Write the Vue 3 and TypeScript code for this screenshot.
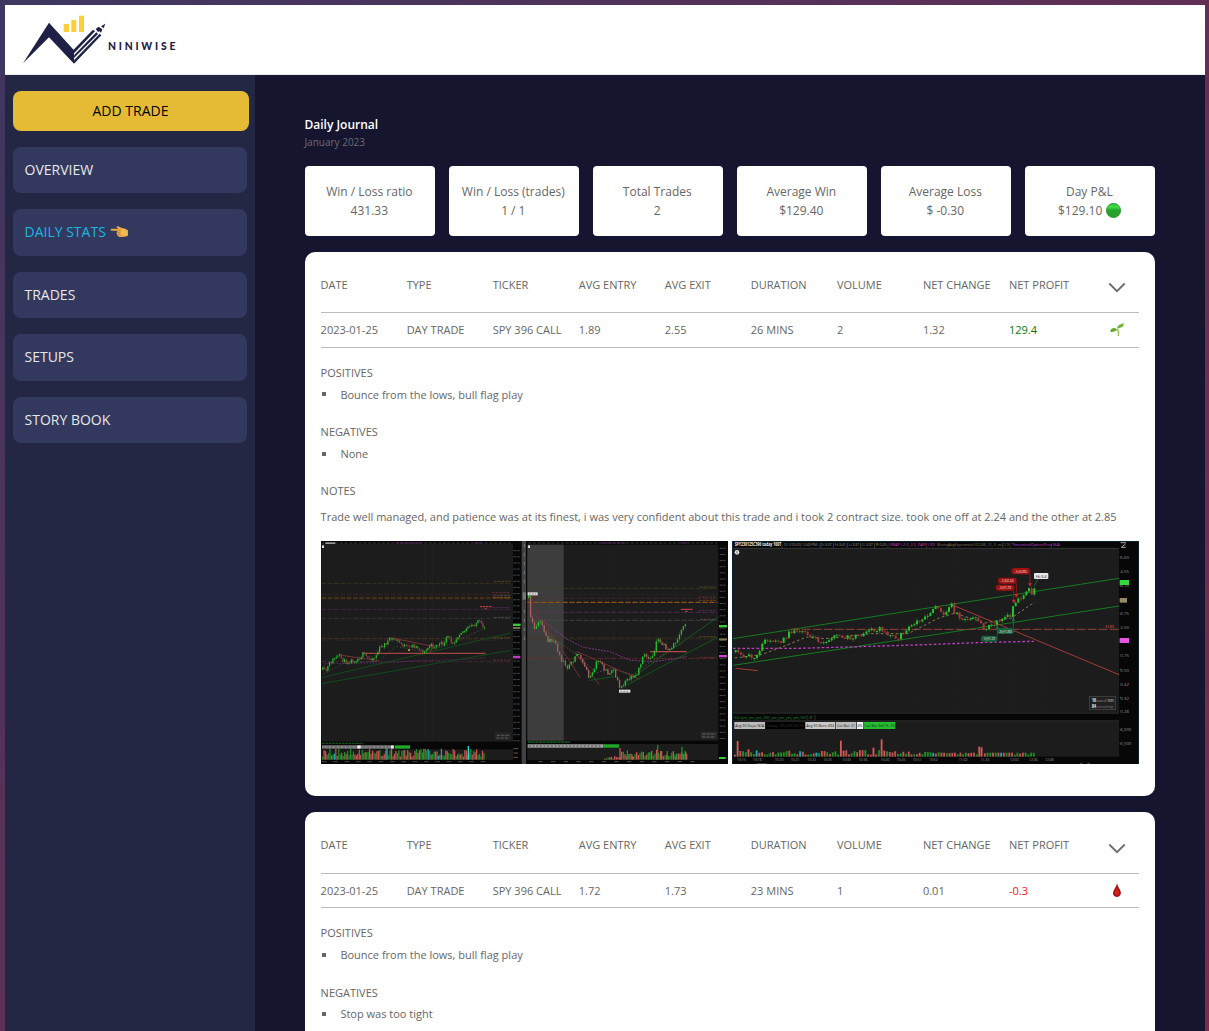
<script setup lang="ts">
type Point = [number, number]

interface Candle {
  x: number
  top: number
  height: number
  high: number
  low: number
  color: string
}

interface Trade {
  date: string
  type: string
  ticker: string
  entry: string
  exit: string
  duration: string
  volume: string
  change: string
  profit: string
  win: boolean
  positives: string[]
  negatives: string[]
  notes: string
}

const navItems = ['OVERVIEW', 'DAILY STATS', 'TRADES', 'SETUPS', 'STORY BOOK']
const activeItem = 'DAILY STATS'

const stats = [
  { label: 'Win / Loss ratio', value: '431.33' },
  { label: 'Win / Loss (trades)', value: '1 / 1' },
  { label: 'Total Trades', value: '2' },
  { label: 'Average Win', value: '$129.40' },
  { label: 'Average Loss', value: '$ -0.30' },
  { label: 'Day P&L', value: '$129.10', dot: true },
]

const columns = ['DATE', 'TYPE', 'TICKER', 'AVG ENTRY', 'AVG EXIT', 'DURATION', 'VOLUME', 'NET CHANGE', 'NET PROFIT']

const trades: Trade[] = [
  {
    date: '2023-01-25', type: 'DAY TRADE', ticker: 'SPY 396 CALL', entry: '1.89', exit: '2.55',
    duration: '26 MINS', volume: '2', change: '1.32', profit: '129.4', win: true,
    positives: ['Bounce from the lows, bull flag play'],
    negatives: ['None'],
    notes: 'Trade well managed, and patience was at its finest, i was very confident about this trade and i took 2 contract size. took one off at 2.24 and the other at 2.85',
  },
  {
    date: '2023-01-25', type: 'DAY TRADE', ticker: 'SPY 396 CALL', entry: '1.72', exit: '1.73',
    duration: '23 MINS', volume: '1', change: '0.01', profit: '-0.3', win: false,
    positives: ['Bounce from the lows, bull flag play'],
    negatives: ['Stop was too tight'],
    notes: '',
  },
]

// Repeatable pseudo random series, so the charts look the same on every load
function series(seed: number) {
  let s = seed
  return () => {
    s = (s * 16807) % 2147483647
    return s / 2147483647
  }
}

function priceAt(points: Point[], x: number): number {
  for (let i = 1; i < points.length; i++) {
    const a = points[i - 1]
    const b = points[i]
    if (x <= b[0]) return a[1] + ((b[1] - a[1]) * (x - a[0])) / (b[0] - a[0])
  }
  return points[points.length - 1][1]
}

function candles(points: Point[], step: number, noise: number, seed: number, down: string): Candle[] {
  const rnd = series(seed)
  const out: Candle[] = []
  const end = points[points.length - 1][0]
  let prev = points[0][1]
  for (let x = points[0][0]; x <= end; x += step) {
    const next = priceAt(points, x) + (rnd() - 0.5) * noise
    const top = Math.min(prev, next)
    const height = Math.max(3, Math.abs(prev - next))
    out.push({
      x, top, height,
      high: top - rnd() * noise * 0.5,
      low: top + height + rnd() * noise * 0.5,
      color: next <= prev ? '#22c32b' : down,
    })
    prev = next
  }
  return out
}

const priceLeft = candles([[14, 395], [22, 402], [35, 375], [50, 360], [65, 355], [80, 372], [100, 368], [120, 362], [135, 348], [150, 362], [170, 358], [185, 330], [200, 318], [215, 305], [230, 303], [245, 315], [265, 328], [285, 322], [300, 328], [318, 345], [335, 322], [350, 325], [365, 318], [380, 318], [387, 293], [400, 312], [410, 308], [425, 282], [440, 278], [455, 266], [470, 258], [482, 250], [492, 268], [502, 264]], 5, 14, 11, '#8d4a48')
const priceRight = candles([[25, 180], [32, 250], [45, 278], [62, 240], [75, 300], [90, 310], [105, 310], [115, 350], [140, 388], [155, 375], [170, 345], [185, 360], [207, 420], [225, 385], [230, 370], [245, 380], [262, 410], [280, 395], [300, 448], [315, 425], [330, 415], [350, 405], [370, 355], [385, 360], [400, 345], [410, 308], [425, 315], [445, 338], [470, 308], [485, 275], [495, 258], [500, 268]], 5.8, 16, 23, '#a8615f')
const priceOption = candles([[22, 343], [40, 352], [65, 350], [80, 365], [95, 340], [108, 305], [130, 312], [160, 310], [175, 295], [188, 280], [210, 282], [230, 280], [245, 290], [275, 310], [300, 305], [330, 290], [350, 298], [370, 300], [395, 295], [415, 280], [435, 275], [460, 272], [480, 295], [510, 298], [530, 280], [550, 260], [580, 240], [605, 225], [620, 208], [626, 212], [645, 225], [670, 203], [680, 225], [710, 245], [740, 235], [765, 272], [790, 258], [810, 250], [830, 235], [845, 238], [860, 190], [880, 185], [900, 155], [910, 165], [925, 135]], 8, 14, 31, '#a33a38')

interface Bar { x: number; h: number; color: string }

function volume(from: number, to: number, step: number, base: number, spread: number, seed: number, tall: Record<number, number>): Bar[] {
  const rnd = series(seed)
  const out: Bar[] = []
  for (let x = from, i = 0; x < to; x += step, i++) {
    const h = tall[i] ?? base + rnd() * spread
    const r = rnd()
    const color = r < 0.05 ? '#1aa6b4' : r < 0.48 ? '#c25450' : '#1b8f25'
    out.push({ x, h, color: tall[i] ? '#d85a56' : color })
  }
  return out
}

const volLeft = volume(12, 500, 4.4, 9, 25, 5, {})
const volRightEarly = volume(252, 298, 5, 3, 12, 8, {})
const volRight = volume(298, 500, 5, 8, 20, 9, {})
const volOption = volume(18, 915, 8.15, 6, 14, 17, { 1: 47, 5: 22, 39: 48, 40: 18, 51: 27, 54: 52, 55: 18 })
  .filter((b) => b.x < 745 || b.x > 764)
  .map((b) => (b.x > 630 ? { ...b, h: Math.min(b.h, 12) } : b))
volOption.push({ x: 751, h: 30, color: '#d85a56' }, { x: 758, h: 28, color: '#d85a56' })
const humps: Point[] = [[298, 35], [320, 28], [335, 12], [385, 22], [408, 30], [411, 44], [420, 26], [440, 26], [465, 8], [484, 38], [495, 24]]
humps.forEach(([x, h], i) => volRight.push({ x, h, color: i % 2 ? '#1b8f25' : '#c25450' }))

const ticks = Array.from({ length: 32 }, (_, i) => 38 + i * 18.4)
const optionTimes: [number, string][] = [[27, '10:15'], [75, '10:18'], [140, '10:20'], [188, '10:21'], [238, '10:22'], [286, '10:25'], [343, '10:30'], [392, '10:36'], [458, '10:40'], [506, '10:45'], [554, '10:51'], [603, '10:52'], [692, '11:02'], [758, '11:25'], [846, '12:02'], [903, '12:36'], [951, '12:48']]
const optionPrices: [number, string][] = [[62, '5.60'], [104, '4.55'], [146, '4.15'], [230, '2.75'], [274, '2.00'], [358, '0.75'], [401, '0.50'], [443, '0.42'], [485, '0.32'], [526, '0.28'], [578, '4,000'], [620, '2,000']]
</script>

<template>
  <div class="frame">
    <header class="topbar">
      <svg class="logo" width="160" height="56" viewBox="60 36 480 168">
        <g fill="#1e2145">
          <path d="M69 190L147 68L222 151L222 191L147 112Z" />
          <path d="M220 150L279 89L285 94L222 160Z" />
          <path d="M222 166L289 97L294 102L222 174Z" />
          <path d="M222 181L299 101L304 106L222 191Z" />
          <path d="M287 87L296 80L307 88L303 98L298 94L294 96Z" />
          <path d="M303 79L316 71L311 85Z" />
        </g>
        <g fill="#fdce3c">
          <rect x="191" y="72" width="16" height="24" />
          <rect x="214" y="60" width="15" height="36" />
          <rect x="237" y="47" width="15" height="49" />
        </g>
        <text x="324" y="150" textLength="202" class="brand">NINIWISE</text>
      </svg>
    </header>

    <div class="body">
      <nav class="sidebar">
        <button class="add">ADD TRADE</button>
        <a v-for="item in navItems" :key="item" class="nav-item" :class="{ active: item === activeItem }">
          <span>{{ item }}</span>
          <svg v-if="item === activeItem" width="18" height="12" viewBox="0 0 54 36">
            <path d="M2 12Q1 8 5 8L25 8L19 3Q19 0 24 1L36 6Q47 7 54 13V29Q45 34 28 33Q21 30 21 25Q18 21 21 17L22 14L4 14Z" fill="#e7ab42" />
            <path d="M23 14H31M22 20H30M23 26H31" stroke="#b5761f" stroke-width="2" fill="none" />
            <path d="M34 11Q44 8 50 15V26Q43 30 34 27Z" fill="#f0bd55" />
          </svg>
        </a>
      </nav>

      <main class="main">
        <h1>Daily Journal</h1>
        <p class="month">January 2023</p>

        <section class="stats">
          <div v-for="s in stats" :key="s.label" class="stat">
            <span>{{ s.label }}</span>
            <span class="value">{{ s.value }}
              <svg v-if="s.dot" class="dot" width="15" height="15" viewBox="0 0 30 30">
                <defs>
                  <linearGradient id="ball" x1="0" y1="0" x2="0" y2="1">
                    <stop offset="0" stop-color="#2fbd35" />
                    <stop offset=".25" stop-color="#41dc46" />
                    <stop offset=".5" stop-color="#22a42a" />
                    <stop offset="1" stop-color="#27a02d" />
                  </linearGradient>
                </defs>
                <circle cx="15" cy="15" r="14.3" fill="url(#ball)" stroke="#258c2a" stroke-width="1.4" />
              </svg>
            </span>
          </div>
        </section>

        <article v-for="(t, ti) in trades" :key="ti" class="card">
          <div class="row head">
            <span v-for="c in columns" :key="c">{{ c }}</span>
            <svg class="chevron" width="18" height="12" viewBox="0 0 18 12">
              <path d="M1.3 1.5L9 9.2L16.7 1.5" fill="none" stroke="#6c6c6c" stroke-width="1.8" />
            </svg>
          </div>
          <div class="row data">
            <span>{{ t.date }}</span><span>{{ t.type }}</span><span>{{ t.ticker }}</span>
            <span>{{ t.entry }}</span><span>{{ t.exit }}</span><span>{{ t.duration }}</span>
            <span>{{ t.volume }}</span><span>{{ t.change }}</span>
            <span :class="t.win ? 'gain' : 'loss'">{{ t.profit }}</span>
            <svg v-if="t.win" class="mark" width="14" height="14" viewBox="0 0 42 42">
              <path d="M25 39Q27 25 23 19" fill="none" stroke="#92bd55" stroke-width="4" />
              <path d="M1 26Q1 15 13 15Q20 16 23 21Q18 22 14 25Q7 29 1 26Z" fill="#61ab2b" />
              <path d="M22 18Q21 8 28 5Q35 4 41 1Q42 9 35 13Q28 15 22 18Z" fill="#6fb432" />
            </svg>
            <svg v-else class="mark" width="14" height="14" viewBox="0 0 42 42">
              <path d="M21 1Q22 8 29 19Q35 30 31 36Q27 42 21 42Q14 42 10 36Q7 30 13 19Q20 8 21 1Z" fill="#a31311" />
              <path d="M21 12Q18 20 14 28Q13 36 20 37Q29 37 27 28Q23 20 21 12Z" fill="#d91f1c" />
            </svg>
          </div>

          <section class="block">
            <h2>POSITIVES</h2>
            <ul><li v-for="p in t.positives" :key="p">{{ p }}</li></ul>
          </section>
          <section class="block">
            <h2>NEGATIVES</h2>
            <ul><li v-for="n in t.negatives" :key="n">{{ n }}</li></ul>
          </section>
          <template v-if="t.notes">
            <h2>NOTES</h2>
            <p class="notes">{{ t.notes }}</p>
          </template>

          <div v-if="ti === 0" class="shots">
            <!-- Two index charts next to each other -->
            <svg width="407" height="223" viewBox="9 9 1221 669">
              <rect x="9" y="9" width="1221" height="669" fill="#070707" />
              <rect x="10" y="17" width="575" height="594" fill="#1c1c1c" />
              <rect x="10" y="634" width="575" height="32" fill="#1c1c1c" />
              <g stroke="#252525" stroke-width="2"><path d="M322 17V611M345 17V611" /></g>
              <path d="M10 15H585" stroke="#37373a" stroke-width="3" stroke-dasharray="9 5" />
              <path d="M235 15H312M470 15H490" stroke="#602465" stroke-width="3" stroke-dasharray="9 3" />
              <rect x="12" y="22" width="6" height="8" fill="#ddd" />
              <rect x="22" y="13" width="30" height="5" fill="#999" />
              <g fill="none" stroke-width="2" stroke-dasharray="14 5">
                <path d="M10 136H578" stroke="#443c1a" />
                <path d="M10 169H578" stroke="#452c2b" />
                <path d="M10 178H578M10 182H578" stroke="#6a4114" />
                <path d="M10 214H578" stroke="#522b55" />
                <path d="M10 241H578" stroke="#404040" />
                <path d="M10 301H578" stroke="#5c4117" />
                <path d="M10 371H578" stroke="#552d41" />
              </g>
              <g fill="none" stroke-width="2" stroke-dasharray="3 6">
                <path d="M10 156H570" stroke="#3d2525" />
                <path d="M10 306H570" stroke="#743437" />
                <path d="M20 377L210 374L310 367L420 365L505 359" stroke="#7a327e" stroke-width="3" />
                <path d="M18 407L80 375L180 370L235 325L310 340L380 325L500 270" stroke="#686868" />
              </g>
              <path d="M10 419L578 285M10 437L578 337" stroke="#124a1a" stroke-width="3" />
              <path d="M70 352L182 368M232 302L345 325L335 345" stroke="#773332" stroke-width="3" fill="none" />
              <path d="M134 346H503" stroke="#a24343" stroke-width="4" />
              <g v-for="c in priceLeft" :key="c.x" :fill="c.color">
                <rect :x="c.x" :y="c.high" width="1.5" :height="c.low - c.high" opacity=".6" />
                <rect :x="c.x - 1" :y="c.top" width="3.5" :height="c.height" />
              </g>
              <rect x="270" y="334" width="6" height="5" fill="#c8a21c" />
              <path d="M486 206H521M500 212H506" stroke="#bd3a3a" stroke-width="4" stroke-dasharray="7 2" />
              <g stroke-width="3" stroke-dasharray="8 3">
                <path d="M528 130H577M525 299H577" stroke="#50451f" />
                <path d="M522 164H577M525 366H577" stroke="#5c2d2d" />
                <path d="M525 173H577M528 238H577" stroke="#484848" />
                <path d="M525 179H577" stroke="#884e11" />
                <path d="M522 209H577" stroke="#502a57" />
              </g>
              <rect x="532" y="585" width="46" height="20" fill="#252525" stroke="#303030" />
              <path d="M536 592H576M534 600H572" stroke="#5a5a5a" stroke-width="3" stroke-dasharray="10 3" />
              <path v-for="y in ticks" :key="y" :d="`M586 ${y}H605`" stroke="#37475a" stroke-width="3" stroke-dasharray="9 2" />
              <rect x="585" y="257" width="23" height="7" fill="#39c73d" />
              <rect x="585" y="267" width="22" height="6" fill="#77704f" />
              <rect x="585" y="354" width="22" height="7" fill="#c13ac1" />
              <path d="M12 616H136" stroke="#14501b" stroke-width="4" stroke-dasharray="8 2" />
              <rect x="12" y="622" width="216" height="10" fill="#858585" />
              <path d="M14 627H225" stroke="#6a6a6a" stroke-width="4" stroke-dasharray="7 5" />
              <path d="M118 627H128M219 627H227" stroke="#eee" stroke-width="9" />
              <rect x="230" y="622" width="46" height="10" fill="#1faa2a" />
              <rect v-for="b in volLeft" :key="b.x" :x="b.x" :y="665 - b.h" width="3.8" :height="b.h" :fill="b.color" />
              <rect x="449" y="624" width="4" height="41" fill="#21d2dc" />
              <rect x="203" y="631" width="3" height="34" fill="#21a2ac" />
              <path d="M12 671H520" stroke="#444" stroke-width="3" stroke-dasharray="14 20" />
              <path d="M586 632H600M586 645H600M586 658H600" stroke="#774e3c" stroke-width="3" />
              <rect x="611" y="9" width="13" height="669" fill="#424242" />
              <path d="M619 18V150M619 215V320" stroke="#727272" stroke-width="3" stroke-dasharray="10 17" />
              <rect x="614" y="163" width="10" height="22" fill="#777" />

              <g transform="translate(606 0)">
                <rect x="22" y="20" width="573" height="588" fill="#1c1c1c" />
                <rect x="22" y="20" width="109" height="588" fill="#3d3d3d" />
                <rect x="22" y="618" width="573" height="48" fill="#1c1c1c" />
                <path d="M25 15H592" stroke="#37373a" stroke-width="3" stroke-dasharray="9 5" />
                <path d="M242 15H318M482 15H500" stroke="#602465" stroke-width="3" stroke-dasharray="9 3" />
                <rect x="24" y="22" width="6" height="8" fill="#ddd" />
                <path d="M252 20V608M279 20V608M500 20V608" stroke="#232323" stroke-width="2" />
                <g fill="none" stroke-width="2" stroke-dasharray="16 5">
                  <path d="M22 151H592" stroke="#4b451b" />
                  <path d="M22 181H592" stroke="#542f2e" />
                  <path d="M22 193H592" stroke="#8c5012" stroke-width="3.5" />
                  <path d="M22 223H592" stroke="#66306a" />
                  <path d="M22 247H592" stroke="#505050" />
                  <path d="M22 300H592" stroke="#4d3e18" />
                  <path d="M22 361H592" stroke="#7a302e" />
                </g>
                <path d="M22 304H592M22 169H592" stroke="#453634" stroke-width="2" stroke-dasharray="3 6" />
                <path d="M32 225L75 252L140 303L190 328L270 341L330 367L400 371L460 363L500 355" stroke="#88378c" stroke-width="3" stroke-dasharray="5 4" fill="none" />
                <path d="M35 235L110 308L170 350L230 405L270 390L340 410L390 373L490 313" stroke="#67624c" stroke-width="2" stroke-dasharray="5 5" fill="none" />
                <path d="M25 178L180 418M170 340L358 424M165 343L238 440M415 300L450 335" stroke="#6e302e" stroke-width="3" fill="none" />
                <path d="M303 450L592 298M310 440L460 330L596 236M208 427L290 415" stroke="#14541d" stroke-width="3" fill="none" />
                <path d="M390 341H500" stroke="#b24a49" stroke-width="4" />
                <g v-for="c in priceRight" :key="c.x" :fill="c.color">
                  <rect :x="c.x + .5" :y="c.high" width="1.5" :height="c.low - c.high" opacity=".6" />
                  <rect :x="c.x - 1" :y="c.top" width="4" :height="c.height" />
                </g>
                <rect x="23" y="163" width="30" height="9" fill="#ddd" />
                <rect x="297" y="455" width="34" height="9" fill="#e4e4e4" />
                <path d="M301 460H327M27 168H48" stroke="#888" stroke-width="3" stroke-dasharray="6 3" />
                <path d="M482 214H518M496 220H503" stroke="#d64545" stroke-width="3" />
                <g stroke-width="3" stroke-dasharray="8 3">
                  <path d="M539 147H588M538 296H588" stroke="#50451f" />
                  <path d="M535 177H588M540 358H588" stroke="#652f2d" />
                  <path d="M537 187H588" stroke="#704318" />
                  <path d="M535 218H588" stroke="#502a57" />
                  <path d="M541 244H588" stroke="#505050" />
                </g>
                <rect x="544" y="582" width="46" height="20" fill="#282828" stroke="#383838" />
                <path d="M547 588H588M546 597H582" stroke="#646464" stroke-width="3" stroke-dasharray="10 3" />
                <path v-for="y in ticks" :key="y" :d="`M599 ${y - 7}H616`" stroke="#4c4c4c" stroke-width="3" stroke-dasharray="9 2" />
                <rect x="597" y="261" width="24" height="7" fill="#39c73d" />
                <rect x="597" y="301" width="24" height="6" fill="#7d7452" />
                <rect x="597" y="351" width="24" height="7" fill="#cc41cc" />
                <rect x="597" y="657" width="20" height="6" fill="#39c73d" />
                <path d="M24 612H150" stroke="#155f1e" stroke-width="4" stroke-dasharray="9 2" />
                <rect x="23" y="619" width="227" height="10" fill="#a5a5a5" />
                <path d="M26 624H245" stroke="#6a6a6a" stroke-width="4" stroke-dasharray="7 4" />
                <rect x="250" y="619" width="47" height="10" fill="#1faa2a" />
                <rect v-for="b in volRightEarly" :key="b.x" :x="b.x" :y="665 - b.h" width="4" :height="b.h" :fill="b.color" />
                <rect v-for="(b, i) in volRight" :key="i" :x="b.x" :y="665 - b.h" width="4" :height="b.h" :fill="b.color" />
                <path d="M55 671H525" stroke="#505050" stroke-width="3" stroke-dasharray="13 25" />
              </g>
            </svg>

            <!-- Option contract chart with the fills -->
            <svg width="407" height="223" viewBox="12 9 1221 669">
              <rect x="12" y="9" width="1221" height="669" fill="#070707" />
              <rect x="15" y="32" width="1158" height="491" fill="#1c1c1c" />
              <rect x="15" y="551" width="1158" height="105" fill="#1c1c1c" />
              <path d="M13 10H1232V678M13 10V678" fill="none" stroke="#0d2631" stroke-width="3" />
              <path d="M15 31H1173M15 525H1173M15 549H1173" stroke="#383838" stroke-width="3" />
              <path d="M15 58H1173M15 100H1173M15 142H1173M15 184H1173M15 226H1173M15 268H1173M15 310H1173M15 352H1173M15 394H1173M15 436H1173M15 478H1173M178 32V523M252 32V523M396 32V523M565 32V523M692 32V523M759 32V523M846 32V523M953 32V523" stroke="#252525" stroke-width="2" stroke-dasharray="3 5" />
              <g class="tiny" font-size="13">
                <text x="20" y="25" textLength="140" lengthAdjust="spacingAndGlyphs" fill="#ededed" font-weight="700">SPY230125C396 today 100T</text>
                <text x="168" y="25" textLength="308" fill="#858585">D: 1/25/23, 12:40 PM | O: 3.37 | H: 3.41 | L: 3.37 | C: 3.37 | R: 0.25</text>
                <text x="484" y="25" textLength="136" fill="#cb45cf" lengthAdjust="spacingAndGlyphs">VWAP (-2.0, 2.0, DAY)  1.83</text>
                <text x="627" y="25" textLength="215" fill="#857f60" lengthAdjust="spacingAndGlyphs">MovingAvgExponential (CLOSE, 21, 0, no)  2.9</text>
                <text x="851" y="25" textLength="144" fill="#cb45cf" lengthAdjust="spacingAndGlyphs">TheoreticalOptionPrice  N/A</text>
                <text x="18" y="543" textLength="215" fill="#1c9a2b" lengthAdjust="spacingAndGlyphs">Vol (yes, yes, yes, 200, yes, yes, yes, yes, 50)</text>
                <text x="242" y="543" textLength="12" fill="#1c9a2b">21</text>
              </g>
              <path d="M162 14V30M278 14V30M317 14V30M357 14V30M398 14V30M439 14V30M480 14V30M596 14V30M824 14V30M846 14V30M970 14V30M237 531V547M261 531V547" stroke="#444" stroke-width="2" />
              <circle cx="27" cy="43" r="7" fill="#e5e5e5" /><path d="M27 39V47" stroke="#444" stroke-width="2" />
              <path d="M15 302L620 207L1173 121M15 382L620 290L1173 204" stroke="#167c22" stroke-width="3" />
              <path d="M671 200L1173 410M22 391L90 398" stroke="#a13c3a" stroke-width="3" />
              <path d="M188 274H1173" stroke="#94403e" stroke-width="3" stroke-dasharray="27 6" />
              <path d="M15 331H210L360 327L560 321L780 313L918 310" fill="none" stroke="#b93fbd" stroke-width="4" stroke-dasharray="8 6" />
              <path d="M20 360L100 350L180 320L235 297L290 302L430 287L540 287L630 241L680 225L770 255L850 240L920 192" fill="none" stroke="#827950" stroke-width="3" stroke-dasharray="8 7" />
              <g v-for="c in priceOption" :key="c.x" :fill="c.color">
                <rect :x="c.x" :y="c.high" width="2" :height="c.low - c.high" opacity=".65" />
                <rect :x="c.x - 2" :y="c.top" width="6" :height="c.height" />
              </g>
              <path d="M857 158V190M865 136V172M906 108V138" stroke="#8d1717" stroke-width="3" />
              <path d="M851 185H863L857 196ZM859 168H871L865 179ZM900 136H912L906 146Z" fill="#d22626" />
              <path d="M808 292V262M856 270V238M918 145L930 123" stroke="#226147" stroke-width="3" />
              <path d="M851 248L856 236L861 248ZM803 272L808 260L813 272Z" fill="#1b7250" />
              <g class="tiny fill-tag" font-size="13">
                <rect x="851" y="90" width="55" height="19" rx="8" fill="#a31010" /><text x="858" y="104" textLength="40">-1@2.85</text>
                <rect x="810" y="119" width="56" height="18" rx="8" fill="#a31010" /><text x="817" y="133" textLength="40">-1@2.24</text>
                <rect x="803" y="140" width="56" height="18" rx="8" fill="#a31010" /><text x="812" y="154" textLength="38">-1@1.73</text>
                <rect x="807" y="270" width="51" height="18" rx="8" fill="#13613e" /><text x="813" y="284" textLength="38">2@1.89</text>
                <rect x="759" y="293" width="50" height="18" rx="8" fill="#13613e" /><text x="766" y="307" textLength="36">1@1.72</text>
                <rect x="918" y="105" width="43" height="18" rx="3" fill="#e8e8e8" /><text x="923" y="119" textLength="33" class="dark">Hi: 3.4</text>
              </g>
              <g class="tiny" font-size="13" fill="#979797">
                <text v-for="[y, label] in optionPrices" :key="label + y" x="1177" :y="y">{{ label }}</text>
                <text v-for="[x, label] in optionTimes" :key="label" :x="x" y="670" textLength="26" lengthAdjust="spacingAndGlyphs">{{ label }}</text>
                <text x="1131" y="269" textLength="27" fill="#d34c4a">$1.89</text>
              </g>
              <rect x="1175" y="126" width="28" height="15" fill="#36d83b" />
              <rect x="1175" y="180" width="22" height="14" fill="#938963" />
              <rect x="1175" y="300" width="28" height="15" fill="#e654e6" />
              <path d="M1178 14H1193M1180 28L1193 17M1180 28H1193" fill="none" stroke="#aaa" stroke-width="3" />
              <path d="M1175 58H1179M1175 142H1179M1175 226H1179M1175 310H1179M1175 394H1179M1175 478H1179M1175 574H1179M1175 616H1179" stroke="#777" stroke-width="2" />
              <g class="tiny" font-size="13">
                <rect x="1084" y="475" width="78" height="39" fill="#202020" stroke="#4c4c4c" stroke-width="2" />
                <text x="1091" y="492" textLength="66" fill="#8d8d8d"><tspan fill="#ddd" font-weight="700">16</tspan> out of <tspan fill="#ddd">100</tspan></text>
                <text x="1091" y="509" textLength="64" fill="#707070"><tspan fill="#ddd" font-weight="700">84</tspan> remaining</text>
                <rect x="19" y="552" width="92" height="21" fill="#bdbdbd" /><text x="22" y="567" textLength="86" lengthAdjust="spacingAndGlyphs" class="dark">Avg 30 Days: N/A</text>
                <rect x="113" y="552" width="118" height="21" fill="#000" /><text x="117" y="567" textLength="110" lengthAdjust="spacingAndGlyphs" fill="#3c3c3c">Today: 220,355  30.0%</text>
                <rect x="232" y="552" width="89" height="21" fill="#c8c8c8" /><text x="235" y="567" textLength="83" lengthAdjust="spacingAndGlyphs" class="dark">Avg 30 Bars: 494</text>
                <rect x="323" y="552" width="62" height="21" fill="#bdbdbd" /><text x="326" y="567" textLength="55" lengthAdjust="spacingAndGlyphs" class="dark">Cur Bar: 21</text>
                <rect x="387" y="552" width="18" height="21" fill="#f0f0f0" /><text x="388" y="567" textLength="15" lengthAdjust="spacingAndGlyphs" class="dark">4%</text>
                <rect x="406" y="552" width="96" height="21" fill="#25bd30" /><text x="409" y="567" textLength="91" lengthAdjust="spacingAndGlyphs" class="dark">Cur Bar Sell %: 20</text>
              </g>
              <rect v-for="(b, i) in volOption" :key="i" :x="b.x" :y="656 - b.h" width="5.5" :height="b.h" :fill="b.color" />
              <path d="M86 677H116M1056 676H1064M1078 676H1086" stroke="#444" stroke-width="3" />
            </svg>
          </div>
        </article>
      </main>
    </div>
  </div>
</template>

<style>
body {
  margin: 0;
  overflow: hidden;
}
</style>

<style scoped>
.frame {
  box-sizing: border-box;
  height: 1031px;
  padding: 5px 4px 0 5px;
  display: flex;
  flex-direction: column;
  overflow: hidden;
  background: linear-gradient(135deg, #3e3760, #80284a);
  font-family: 'Open Sans', 'Noto Sans', sans-serif;
}

.topbar {
  flex: none;
  box-sizing: border-box;
  height: 70px;
  padding: 7px 0 0 15px;
  background: #fff;
  border-bottom: 1px solid #ececec;
}

.logo { display: block; }

.brand {
  font: 900 31px Lato, sans-serif;
  fill: #1e2145;
}

.body {
  flex: 1;
  min-height: 0;
  display: flex;
}

.sidebar {
  flex: none;
  box-sizing: border-box;
  width: 250px;
  padding: 16px 8px;
  display: flex;
  flex-direction: column;
  gap: 16px;
  background: #242744;
  font-size: 14px;
}

.add {
  width: 236px;
  height: 40px;
  padding: 0 1px 2px 0;
  border: 0;
  border-radius: 8px;
  background: #e5bb35;
  color: #000;
  font: inherit;
}

.nav-item {
  box-sizing: border-box;
  height: 46.4px;
  padding: 0 0 1.4px 11.5px;
  display: flex;
  align-items: center;
  gap: 4px;
  border-radius: 8px;
  background: #33385f;
  color: #e8e8e8;
}

.nav-item.active { color: #1bb5e0; }

.main {
  flex: 1;
  padding: 41px 50px 0;
  background: #161530;
  overflow: hidden;
  color: #666;
}

h1 {
  margin: 0 0 0 -0.5px;
  font-size: 12px;
  line-height: 18px;
  font-weight: 600;
  color: #fff;
}

.month {
  margin: 0 0 16px -0.6px;
  font-size: 10px;
  line-height: 16px;
  color: #6b6b70;
}

.stats {
  display: flex;
  gap: 14px;
}

.stat {
  box-sizing: border-box;
  width: 130px;
  height: 70px;
  padding: 16px 1.4px 16px 0;
  display: flex;
  flex-direction: column;
  align-items: center;
  border-radius: 4px;
  background: #fff;
  font-size: 12px;
  line-height: 19px;
}

.value {
  display: flex;
  align-items: center;
  gap: 3.4px;
}

.card {
  box-sizing: border-box;
  width: 850px;
  height: 544.4px;
  margin-top: 16px;
  padding: 16px 16px 0 15.6px;
  border-radius: 10px;
  background: #fff;
  font-size: 11px;
  line-height: 15px;
}

.row {
  box-sizing: border-box;
  display: grid;
  grid-template-columns: repeat(9, 86.06px) 1fr;
  border-bottom: 1px solid #bcbcbc;
  white-space: nowrap;
}

.row > * { min-width: 0; }

.head {
  height: 45.3px;
  padding-top: 8.7px;
}

.data {
  height: 34.7px;
  padding-bottom: 0.7px;
  align-items: center;
}

.chevron {
  justify-self: center;
  margin-top: 5.8px;
}

.mark { justify-self: center; }

.gain { color: #087808; }
.loss { color: #f51111; }

.block { height: 59.2px; }

.data + .block { margin-top: 17.1px; }

h2 {
  margin: 0;
  font-size: 11px;
  line-height: 15px;
  font-weight: 400;
}

ul {
  margin: 6.8px 0 0;
  padding: 0;
  list-style: none;
}

li {
  display: flex;
  align-items: center;
  gap: 14.4px;
}

li::before {
  content: '';
  width: 4px;
  height: 4px;
  margin-left: 1.4px;
  background: #666;
}

.notes {
  margin: 10.9px 0 16.5px;
  min-height: 15px;
  white-space: nowrap;
}

.shots {
  display: flex;
  gap: 4px;
}

.shots svg {
  flex: none;
  display: block;
}

.tiny { font-family: 'Open Sans', sans-serif; }
.fill-tag text { fill: #e6d6d6; }
.tiny text.dark { fill: #222; }
</style>
